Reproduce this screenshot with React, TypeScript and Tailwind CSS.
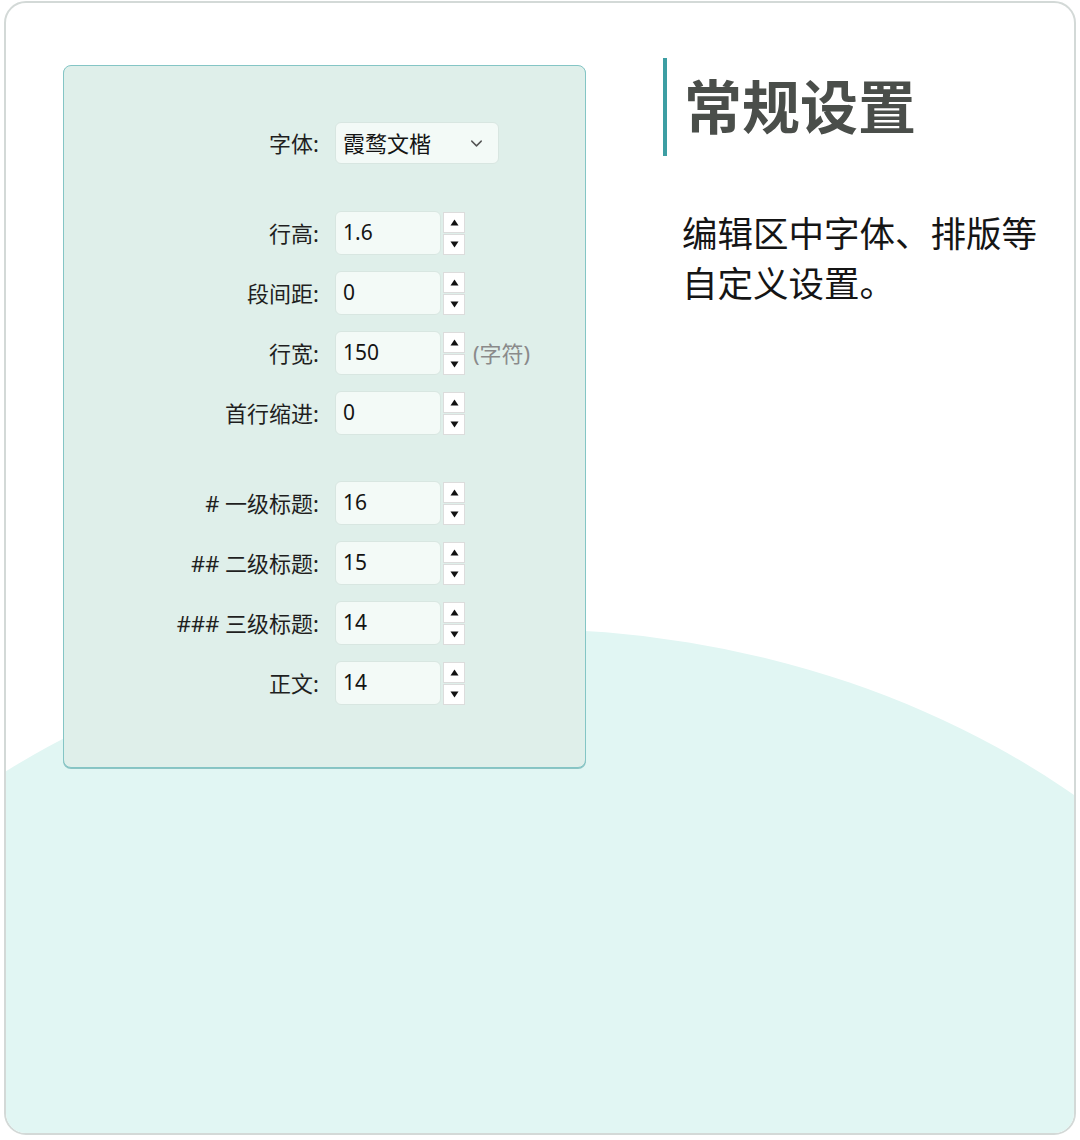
import React from "react";
import { ChevronDown } from "lucide-react";

const font = { fontFamily: '"Noto Sans", "Noto Sans CJK SC", sans-serif' };

const Spinner = () => (
  <div className="flex flex-col gap-[1px] ml-[2px]">
    <div className="flex h-[21px] w-[22px] items-center justify-center border border-[#dcdcdc] bg-white">
      <svg width="9" height="7" viewBox="0 0 9 7">
        <path d="M4.5 0.5L8.5 6.5H0.5Z" fill="#111" />
      </svg>
    </div>
    <div className="flex h-[21px] w-[22px] items-center justify-center border border-[#dcdcdc] bg-white">
      <svg width="9" height="7" viewBox="0 0 9 7">
        <path d="M4.5 6.5L8.5 0.5H0.5Z" fill="#111" />
      </svg>
    </div>
  </div>
);

const NumRow = ({
  label,
  value,
  unit,
}: {
  label: string;
  value: string;
  unit?: string;
}) => (
  <div className="flex h-[44px] items-center">
    <div className="w-[255px] text-right text-[22px] text-[#1f1f1f]">{label}</div>
    <div className="ml-[16px] flex h-[44px] w-[106px] items-center rounded-[6px] border border-[#d8e6e1] bg-[#f3faf7] px-[7px] text-[21px] text-[#141414]">
      {value}
    </div>
    <Spinner />
    {unit && <span className="ml-[8px] text-[22px] text-[#8a8a8a]">{unit}</span>}
  </div>
);

export default function App() {
  return (
    <div className="bg-white px-[4px] pt-[1px]" style={font}>
      <div className="relative flex h-[1134px] w-[1072px] overflow-hidden rounded-[22px] border-2 border-[#d3d9d7] bg-white pl-[57px] pt-[62px]">
        <div className="absolute left-[-338px] top-[626px] h-[1400px] w-[1708px] rounded-[50%] bg-[#e1f6f3]" />

        <div className="relative z-10 flex h-[703px] w-[523px] flex-col rounded-[8px] border border-[#84c5c5] bg-[#dfefea] pt-[56px] shadow-[0_1px_0_#8cc4c4]">
          <div className="flex h-[42px] items-center">
            <div className="w-[255px] text-right text-[22px] text-[#1f1f1f]">字体:</div>
            <div className="ml-[16px] flex h-[42px] w-[164px] items-center justify-between rounded-[6px] border border-[#d8e6e1] bg-[#f3faf7] pl-[7px] pr-[12px] text-[22px] text-[#141414]">
              <span>霞鹜文楷</span>
              <ChevronDown size={19} strokeWidth={1.8} color="#555" />
            </div>
          </div>
          <div className="mt-[47px] flex flex-col gap-[16px]">
            <NumRow label="行高:" value="1.6" />
            <NumRow label="段间距:" value="0" />
            <NumRow label="行宽:" value="150" unit="(字符)" />
            <NumRow label="首行缩进:" value="0" />
          </div>
          <div className="mt-[46px] flex flex-col gap-[16px]">
            <NumRow label="# 一级标题:" value="16" />
            <NumRow label="## 二级标题:" value="15" />
            <NumRow label="### 三级标题:" value="14" />
            <NumRow label="正文:" value="14" />
          </div>
        </div>

        <div className="relative z-10 ml-[77px] -mt-[7px] flex flex-col">
          <div className="flex h-[98px] items-center">
            <div className="h-[98px] w-[4px] bg-[#3d9ea3]" />
            <h1 className="ml-[17px] text-[58px] font-bold leading-none text-[#4a4e4a]">常规设置</h1>
          </div>
          <p className="ml-[19px] mt-[52px] w-[362px] text-[35.5px] leading-[50px] text-[#151515]">
            编辑区中字体、排版等自定义设置。
          </p>
        </div>
      </div>
    </div>
  );
}
